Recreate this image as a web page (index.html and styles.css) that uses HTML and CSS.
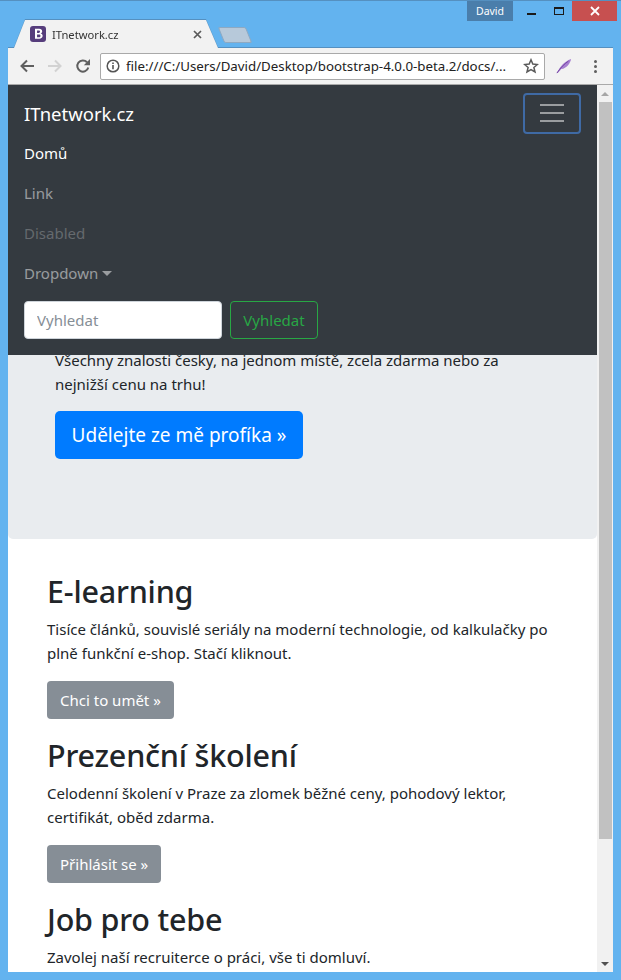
FILE: index.html
```html
<!DOCTYPE html>
<html lang="cs">
<head>
    <meta charset="UTF-8">
    <title>ITnetwork.cz</title>
    <link rel="stylesheet" href="styles.css">
</head>
<body>
    <div class="window">
        <div class="titlebar">
            <div class="tab-wrap">
                <div class="tab">
                    <svg class="tab-icon" width="16" height="16" viewBox="0 0 16 16"><rect width="16" height="16" rx="3" fill="#563d7c"/><path transform="translate(-.7 -1.200) scale(1.140)" d="M5 3.500h3.600c1.700 0 2.700.9 2.700 2.200 0 1-.6 1.700-1.400 1.900 1.100.2 1.800 1 1.800 2.100 0 1.500-1.100 2.500-3 2.500H5zM6.800 5v2.100h1.400c.8 0 1.200-.4 1.200-1.050S9 5 8.200 5zm0 3.500V11h1.700c.9 0 1.300-.45 1.300-1.250S9.400 8.500 8.400 8.500z" fill="#fff" fill-rule="evenodd"/></svg>
                    <span class="tab-title">ITnetwork.cz</span>
                    <svg class="tab-close" width="9" height="9" viewBox="0 0 9 9"><path d="M1 1l7 7M8 1L1 8" stroke="#5a5a5a" stroke-width="1.700"/></svg>
                </div>
            </div>
            <div class="new-tab"></div>
            <div class="user-badge">David</div>
            <div class="win-btn"><span class="win-min"></span></div>
            <div class="win-btn"><span class="win-max"></span></div>
            <div class="win-close">
                <svg width="10" height="10" viewBox="0 0 10 10"><path d="M1 1l8 8M9 1L1 9" stroke="#fff" stroke-width="1.800"/></svg>
            </div>
        </div>
        <div class="toolbar">
            <svg class="tool" width="16" height="16" viewBox="0 0 16 16"><path d="M15 8H3M8 2.500L2.500 8 8 13.500" fill="none" stroke="#5f5f5f" stroke-width="2"/></svg>
            <svg class="tool" width="16" height="16" viewBox="0 0 16 16"><path d="M1 8h12M8 2.500L13.500 8 8 13.500" fill="none" stroke="#d2d2d2" stroke-width="2"/></svg>
            <svg class="tool" width="16" height="16" viewBox="0 0 16 16"><path d="M13.300 9.500A5.600 5.600 0 1 1 12 4.200" fill="none" stroke="#5f5f5f" stroke-width="2"/><path d="M15 1v6.200H8.800z" fill="#5f5f5f"/></svg>
            <div class="omnibox">
                <svg width="14" height="14" viewBox="0 0 14 14"><circle cx="7" cy="7" r="5.800" fill="none" stroke="#555" stroke-width="1.500"/><path d="M7 6v4.300M7 3.500v1.500" stroke="#555" stroke-width="1.600"/></svg>
                <span class="url">file:///C:/Users/David/Desktop/bootstrap-4.0.0-beta.2/docs/...</span>
                <svg class="star" width="16" height="16" viewBox="0 0 16 16"><path d="M8 1.800l1.800 4.300 4.600.4-3.500 3 1.100 4.500L8 11.600 4 14l1.100-4.500-3.500-3 4.600-.4z" fill="none" stroke="#5a5a5a" stroke-width="1.500"/></svg>
            </div>
            <svg class="quill" width="16" height="16" viewBox="0 0 18 18"><path d="M1 17C4 10 9 4 17 1 16 6 12 11.500 6 12.500L2 17z" fill="#a67fd0"/><path d="M1 17C5 11 9 7 14 3.500" stroke="#6f3d9e" stroke-width="1" fill="none"/></svg>
            <div class="menu-dots"><span></span><span></span><span></span></div>
        </div>
        <div class="viewport">
            <div class="page">
                <nav class="navbar">
                    <div class="navbar-top">
                        <a class="brand">ITnetwork.cz</a>
                        <button class="toggler"><span></span><span></span><span></span></button>
                    </div>
                    <a class="nav-link active">Domů</a>
                    <a class="nav-link">Link</a>
                    <a class="nav-link disabled">Disabled</a>
                    <a class="nav-link">Dropdown<i class="caret"></i></a>
                    <form class="search">
                        <input class="search-input" type="text" placeholder="Vyhledat">
                        <button class="search-btn" type="button">Vyhledat</button>
                    </form>
                </nav>
                <section class="jumbotron">
                    <p>Všechny znalosti česky, na jednom místě, zcela zdarma nebo za nejnižší cenu na trhu!</p>
                    <a class="btn-primary">Udělejte ze mě profíka »</a>
                </section>
                <section class="content">
                    <h2>E-learning</h2>
                    <p>Tisíce článků, souvislé seriály na moderní technologie, od kalkulačky po plně funkční e-shop. Stačí kliknout.</p>
                    <a class="btn-secondary">Chci to umět »</a>
                    <h2>Prezenční školení</h2>
                    <p>Celodenní školení v Praze za zlomek běžné ceny, pohodový lektor, certifikát, oběd zdarma.</p>
                    <a class="btn-secondary">Přihlásit se »</a>
                    <h2>Job pro tebe</h2>
                    <p>Zavolej naší recruiterce o práci, vše ti domluví.</p>
                </section>
            </div>
            <div class="scrollbar">
                <div class="arrow-up"></div>
                <div class="thumb"></div>
                <div class="arrow-down"></div>
            </div>
        </div>
    </div>
</body>
</html>
```

FILE: styles.css
```css
* {
    box-sizing: border-box;
}
html, body {
    margin: 0;
    height: 100%;
    overflow: hidden;
}
body {
    font-family: "Noto Sans", "Open Sans", sans-serif;
    font-size: 15px;
    color: #212529;
}
.window {
    display: flex;
    flex-direction: column;
    width: 621px;
    height: 980px;
    padding: 0 8px 8px 8px;
    background: #63b3ef;
    border-top: 1px solid #5590c0;
}

/* title bar */
.titlebar {
    display: flex;
    align-items: flex-start;
    height: 46px;
    flex-shrink: 0;
}
.tab-wrap {
    position: relative;
    z-index: 1;
    margin: 19px 0 0 6px;
    filter: drop-shadow(0 -1px 0 #5590c0);
}
.tab {
    display: flex;
    align-items: center;
    width: 204px;
    height: 28px;
    padding: 0 8px 0 16px;
    background: #f2f2f2;
    clip-path: polygon(11px 0, 192px 0, 204px 100%, 0 100%);
}
.tab-icon {
    flex-shrink: 0;
}
.tab-title {
    flex: 1;
    margin-left: 6px;
    font-size: 11.200px;
    color: #333;
}
.tab-close {
    margin-right: 8px;
}
.new-tab {
    width: 28px;
    height: 16px;
    margin: 26px 0 0 3px;
    background: #b7c9da;
    border: 1px solid #8ea9c2;
    border-radius: 2px;
    transform: skewX(22deg);
}
.user-badge {
    width: 46px;
    height: 20px;
    margin-left: auto;
    background: #4a7eab;
    color: #fff;
    font-size: 10.500px;
    line-height: 20px;
    text-align: center;
}
.win-btn {
    display: flex;
    align-items: center;
    justify-content: center;
    width: 27px;
    height: 20px;
}
.user-badge + .win-btn {
    margin-left: 5px;
}
.win-min {
    width: 9px;
    height: 2px;
    margin-top: 6px;
    background: #1a1a1a;
}
.win-max {
    width: 10px;
    height: 8px;
    border: 1px solid #1a1a1a;
    border-top-width: 2px;
}
.win-close {
    display: flex;
    align-items: center;
    justify-content: center;
    width: 45px;
    height: 20px;
    margin-right: -4px;
    background: #c75050;
}

/* toolbar */
.toolbar {
    display: flex;
    align-items: center;
    flex-shrink: 0;
    height: 38px;
    padding: 0 0 0 11px;
    background: #f2f2f2;
    border-top: 1px solid #5590c0;
    border-bottom: 1px solid #a9a9a9;
}
.tool {
    margin-right: 12px;
}
.tool:nth-child(3) {
    margin-right: 9px;
}
.omnibox {
    display: flex;
    align-items: center;
    width: 445px;
    height: 27px;
    padding: 0 5px;
    background: #fff;
    border: 1px solid #a9a9a9;
    border-radius: 2px;
}
.url {
    flex: 1;
    margin-left: 6px;
    font-size: 13.300px;
    color: #222;
    white-space: nowrap;
    overflow: hidden;
}
.star {
    margin-left: 4px;
}
.quill {
    margin-left: 11px;
}
.menu-dots {
    display: flex;
    flex-direction: column;
    gap: 2px;
    margin-left: 22px;
}
.menu-dots span {
    width: 3px;
    height: 3px;
    background: #5f5f5f;
    border-radius: 50%;
}

/* page area */
.viewport {
    display: flex;
    flex: 1;
    min-height: 0;
    overflow: hidden;
    background: #fff;
}
.page {
    position: relative;
    flex: 1;
    min-width: 0;
    overflow: hidden;
}
.scrollbar {
    display: flex;
    flex-direction: column;
    align-items: center;
    width: 16px;
    flex-shrink: 0;
    background: #f1f1f1;
}
.arrow-up {
    margin: 7px 0 6px;
    border: 4px solid transparent;
    border-top: 0;
    border-bottom: 4px solid #a6a6a6;
}
.thumb {
    width: 13px;
    height: 737px;
    background: #c1c1c1;
}
.arrow-down {
    margin-top: auto;
    margin-bottom: 6px;
    border: 4px solid transparent;
    border-bottom: 0;
    border-top: 4px solid #505050;
}

/* navbar */
.navbar {
    position: absolute;
    top: 0;
    left: 0;
    right: 0;
    display: flex;
    flex-direction: column;
    height: 270px;
    padding: 8px 16px;
    background: #343a40;
}
.navbar-top {
    display: flex;
    align-items: center;
    justify-content: space-between;
    height: 40px;
}
.brand {
    font-size: 18.500px;
    color: #fff;
}
.toggler {
    display: flex;
    flex-direction: column;
    align-items: center;
    justify-content: center;
    gap: 6px;
    width: 58px;
    height: 41px;
    background: transparent;
    border: 2px solid #3f6aa5;
    border-radius: 4px;
}
.toggler span {
    width: 24px;
    height: 2px;
    background: #9a9da0;
}
.nav-link {
    height: 40px;
    line-height: 40px;
    color: rgba(255, 255, 255, .5);
}
.nav-link.active {
    color: #fff;
}
.nav-link.disabled {
    color: rgba(255, 255, 255, .25);
}
.caret {
    display: inline-block;
    margin-left: 4px;
    vertical-align: 3px;
    border: 5px solid transparent;
    border-bottom: 0;
    border-top: 5px solid rgba(255, 255, 255, .5);
}
.search {
    display: flex;
    gap: 8px;
    margin-top: 8px;
}
.search-input {
    width: 198px;
    height: 38px;
    padding: 0 12px;
    border: 1px solid #ced4da;
    border-radius: 4px;
    font-family: inherit;
    font-size: 15px;
}
.search-input::placeholder {
    color: #868e96;
}
.search-btn {
    width: 88px;
    height: 38px;
    padding: 0;
    background: transparent;
    border: 1px solid #28a745;
    border-radius: 4px;
    color: #28a745;
    font-family: inherit;
    font-size: 15px;
}

/* jumbotron */
.jumbotron {
    height: 454px;
    padding: 263px 47px 0;
    background: #e9ecef;
    border-radius: 0 0 5px 5px;
}
.jumbotron p {
    margin: 0 0 15px;
    line-height: 24px;
    max-width: 460px;
}
.btn-primary {
    display: inline-block;
    width: 248px;
    height: 48px;
    background: #007bff;
    border-radius: 5px;
    color: #fff;
    font-size: 19px;
    line-height: 48px;
    text-align: center;
}

/* sections */
.content {
    padding: 33px 39px 0;
}
.content h2 {
    margin: 0 0 6px;
    font-size: 30.500px;
    font-weight: 500;
    letter-spacing: -.2px;
    line-height: 39px;
    color: #212529;
}
.content p {
    margin: 0 0 16px;
    line-height: 24px;
}
.btn-secondary {
    display: block;
    width: fit-content;
    height: 38px;
    margin-bottom: 17px;
    padding: 0 13px;
    background: #868e96;
    border-radius: 4px;
    color: #fff;
    line-height: 38px;
}
```
